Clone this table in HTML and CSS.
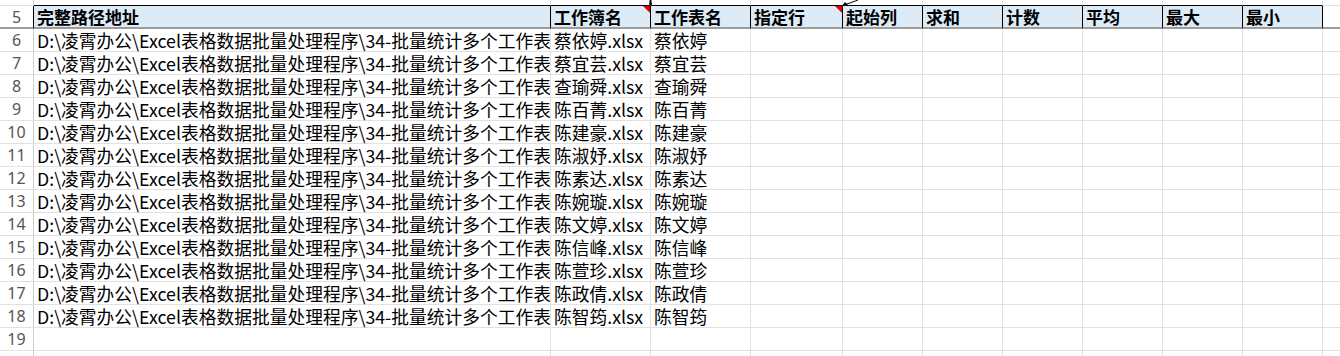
FILE: index.html
```html
<!DOCTYPE html>
<html lang="zh-CN">
<head>
<meta charset="utf-8">
<title>Sheet</title>
<link rel="stylesheet" href="styles.css">
</head>
<body>
<div class="sheet">
  <div class="row r4">
    <div class="rh"></div>
    <div class="c a"></div><div class="c"></div><div class="c"></div><div class="c"></div><div class="c"></div><div class="c"></div><div class="c"></div><div class="c"></div><div class="c"></div><div class="c"></div><div class="c k"></div>
  </div>
  <div class="row head">
    <div class="rh">5</div>
    <div class="c a">完整路径地址</div>
    <div class="c note">工作簿名</div>
    <div class="c">工作表名</div>
    <div class="c note">指定行</div>
    <div class="c">起始列</div>
    <div class="c">求和</div>
    <div class="c">计数</div>
    <div class="c">平均</div>
    <div class="c">最大</div>
    <div class="c">最小</div>
    <div class="c k"></div>
  </div>
  <div class="row"><div class="rh">6</div><div class="c a">D:\凌霄办公\Excel表格数据批量处理程序\34-批量统计多个工作表</div><div class="c">蔡依婷.xlsx</div><div class="c">蔡依婷</div><div class="c"></div><div class="c"></div><div class="c"></div><div class="c"></div><div class="c"></div><div class="c"></div><div class="c"></div><div class="c k"></div></div>
  <div class="row"><div class="rh">7</div><div class="c a">D:\凌霄办公\Excel表格数据批量处理程序\34-批量统计多个工作表</div><div class="c">蔡宜芸.xlsx</div><div class="c">蔡宜芸</div><div class="c"></div><div class="c"></div><div class="c"></div><div class="c"></div><div class="c"></div><div class="c"></div><div class="c"></div><div class="c k"></div></div>
  <div class="row"><div class="rh">8</div><div class="c a">D:\凌霄办公\Excel表格数据批量处理程序\34-批量统计多个工作表</div><div class="c">查瑜舜.xlsx</div><div class="c">查瑜舜</div><div class="c"></div><div class="c"></div><div class="c"></div><div class="c"></div><div class="c"></div><div class="c"></div><div class="c"></div><div class="c k"></div></div>
  <div class="row"><div class="rh">9</div><div class="c a">D:\凌霄办公\Excel表格数据批量处理程序\34-批量统计多个工作表</div><div class="c">陈百菁.xlsx</div><div class="c">陈百菁</div><div class="c"></div><div class="c"></div><div class="c"></div><div class="c"></div><div class="c"></div><div class="c"></div><div class="c"></div><div class="c k"></div></div>
  <div class="row"><div class="rh">10</div><div class="c a">D:\凌霄办公\Excel表格数据批量处理程序\34-批量统计多个工作表</div><div class="c">陈建豪.xlsx</div><div class="c">陈建豪</div><div class="c"></div><div class="c"></div><div class="c"></div><div class="c"></div><div class="c"></div><div class="c"></div><div class="c"></div><div class="c k"></div></div>
  <div class="row"><div class="rh">11</div><div class="c a">D:\凌霄办公\Excel表格数据批量处理程序\34-批量统计多个工作表</div><div class="c">陈淑妤.xlsx</div><div class="c">陈淑妤</div><div class="c"></div><div class="c"></div><div class="c"></div><div class="c"></div><div class="c"></div><div class="c"></div><div class="c"></div><div class="c k"></div></div>
  <div class="row"><div class="rh">12</div><div class="c a">D:\凌霄办公\Excel表格数据批量处理程序\34-批量统计多个工作表</div><div class="c">陈素达.xlsx</div><div class="c">陈素达</div><div class="c"></div><div class="c"></div><div class="c"></div><div class="c"></div><div class="c"></div><div class="c"></div><div class="c"></div><div class="c k"></div></div>
  <div class="row"><div class="rh">13</div><div class="c a">D:\凌霄办公\Excel表格数据批量处理程序\34-批量统计多个工作表</div><div class="c">陈婉璇.xlsx</div><div class="c">陈婉璇</div><div class="c"></div><div class="c"></div><div class="c"></div><div class="c"></div><div class="c"></div><div class="c"></div><div class="c"></div><div class="c k"></div></div>
  <div class="row"><div class="rh">14</div><div class="c a">D:\凌霄办公\Excel表格数据批量处理程序\34-批量统计多个工作表</div><div class="c">陈文婷.xlsx</div><div class="c">陈文婷</div><div class="c"></div><div class="c"></div><div class="c"></div><div class="c"></div><div class="c"></div><div class="c"></div><div class="c"></div><div class="c k"></div></div>
  <div class="row"><div class="rh">15</div><div class="c a">D:\凌霄办公\Excel表格数据批量处理程序\34-批量统计多个工作表</div><div class="c">陈信峰.xlsx</div><div class="c">陈信峰</div><div class="c"></div><div class="c"></div><div class="c"></div><div class="c"></div><div class="c"></div><div class="c"></div><div class="c"></div><div class="c k"></div></div>
  <div class="row"><div class="rh">16</div><div class="c a">D:\凌霄办公\Excel表格数据批量处理程序\34-批量统计多个工作表</div><div class="c">陈萱珍.xlsx</div><div class="c">陈萱珍</div><div class="c"></div><div class="c"></div><div class="c"></div><div class="c"></div><div class="c"></div><div class="c"></div><div class="c"></div><div class="c k"></div></div>
  <div class="row"><div class="rh">17</div><div class="c a">D:\凌霄办公\Excel表格数据批量处理程序\34-批量统计多个工作表</div><div class="c">陈政倩.xlsx</div><div class="c">陈政倩</div><div class="c"></div><div class="c"></div><div class="c"></div><div class="c"></div><div class="c"></div><div class="c"></div><div class="c"></div><div class="c k"></div></div>
  <div class="row"><div class="rh">18</div><div class="c a">D:\凌霄办公\Excel表格数据批量处理程序\34-批量统计多个工作表</div><div class="c">陈智筠.xlsx</div><div class="c">陈智筠</div><div class="c"></div><div class="c"></div><div class="c"></div><div class="c"></div><div class="c"></div><div class="c"></div><div class="c"></div><div class="c k"></div></div>
  <div class="row"><div class="rh">19</div><div class="c a"></div><div class="c"></div><div class="c"></div><div class="c"></div><div class="c"></div><div class="c"></div><div class="c"></div><div class="c"></div><div class="c"></div><div class="c"></div><div class="c k"></div></div>
  <div class="row r20"><div class="rh"></div><div class="c a"></div><div class="c"></div><div class="c"></div><div class="c"></div><div class="c"></div><div class="c"></div><div class="c"></div><div class="c"></div><div class="c"></div><div class="c"></div><div class="c k"></div></div>
</div>
<svg class="connectors" width="1340" height="12" viewBox="0 0 1340 12" aria-hidden="true">
  <path d="M650.5 0 L650.5 5" stroke="#000" stroke-width="2"/>
  <path d="M649 3 L652 3 L651 6 Z" fill="#000"/>
  <path d="M843 5.5 L858 0" stroke="#000" stroke-width="1"/>
  <path d="M842 6 L848 5 L845 2 Z" fill="#000"/>
</svg>
</body>
</html>
```

FILE: styles.css
```css
html, body {
  margin: 0;
  padding: 0;
  background: #ffffff;
  overflow: hidden;
  width: 1340px;
  height: 356px;
}

body {
  position: relative;
  font-family: "Noto Sans CJK SC", "Noto Sans", sans-serif;
}

.sheet {
  width: 1340px;
  overflow: hidden;
}

.row {
  display: grid;
  grid-template-columns: 34px 517px 100px 100px 92px 80px 80px 80px 80px 80px 80px 80px;
  height: 23px;
}

.rh,
.c {
  box-sizing: border-box;
  border-right: 1px solid #e1e1e1;
  border-bottom: 1px solid #e1e1e1;
  height: 23px;
  white-space: nowrap;
}

.rh {
  color: #555555;
  font-family: "Noto Sans", "Open Sans", sans-serif;
  font-size: 16px;
  line-height: 22px;
  text-align: center;
  border-right-color: #d0d0d0;
}

.c {
  font-size: 17.75px;
  line-height: 22px;
  color: #000;
  padding-left: 3px;
}

.c.a {
  overflow-x: clip;
  overflow-y: visible;
}

.row.r4,
.r4 .rh,
.r4 .c {
  height: 6px;
}

.r4 .c {
  border-bottom-color: #000;
}

.r4 .c.k {
  border-bottom-color: #e1e1e1;
}

.row.r20,
.r20 .rh,
.r20 .c {
  height: 5px;
  border-bottom: 0;
}

.head .rh,
.head .c {
  border-bottom: 2px solid #9c9c9c;
}

.head .c {
  position: relative;
  background: #ddebf7;
  border-right-color: #000;
  font-weight: 700;
  font-size: 17px;
}

.head .rh {
  border-right-color: #000;
}

.head .c.k {
  background: #fff;
  border-right-color: #e1e1e1;
}

.note::after {
  content: "";
  position: absolute;
  top: 0;
  right: 0;
  width: 0;
  height: 0;
  border-top: 7px solid #e00000;
  border-left: 7px solid transparent;
}

.connectors {
  position: absolute;
  left: 0;
  top: 0;
}
```
